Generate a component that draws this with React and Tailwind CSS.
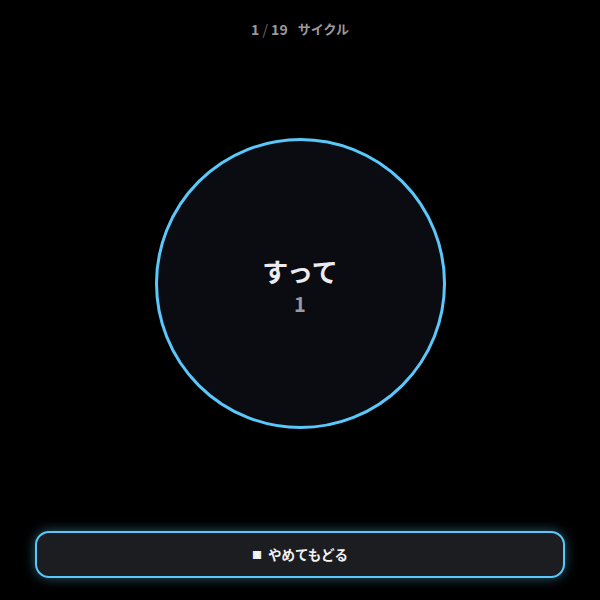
export default function App() {
  return (
    <div
      className="h-[600px] w-full bg-black flex flex-col items-center px-[35px] pt-[19px] pb-[22px]"
      style={{ fontFamily: '"Noto Sans CJK JP", "Noto Sans", sans-serif' }}
    >
      <div className="flex items-center gap-[10px] text-[14px] font-bold text-[#9a9a9e] leading-[20px]">
        <span>
          1 <span className="font-normal text-[#6b6b70]">/</span> 19
        </span>
        <span className="text-[13px]">サイクル</span>
      </div>

      <div className="flex-1 flex items-center justify-center w-full mt-[-4px]">
        <div className="w-[291px] h-[291px] rounded-full border-[3px] border-[#5ac8fa] bg-[#0b0b12] flex flex-col items-center justify-center">
          <div className="text-[26px] font-bold text-[#ececf0] leading-[32px] mt-[6px]">すって</div>
          <div className="text-[20px] font-bold text-[#9a9a9e] leading-[26px] mt-[4px]">1</div>
        </div>
      </div>

      <button className="w-full h-[47px] rounded-[14px] border-2 border-[#5ac8fa] bg-[#1c1d21] shadow-[0_0_12px_rgba(90,200,250,0.45)] flex items-center justify-center gap-[6px] text-[13.5px] font-bold text-[#f2f2f5]">
        <span className="text-[10px]">■</span>
        <span>やめてもどる</span>
      </button>
    </div>
  );
}
